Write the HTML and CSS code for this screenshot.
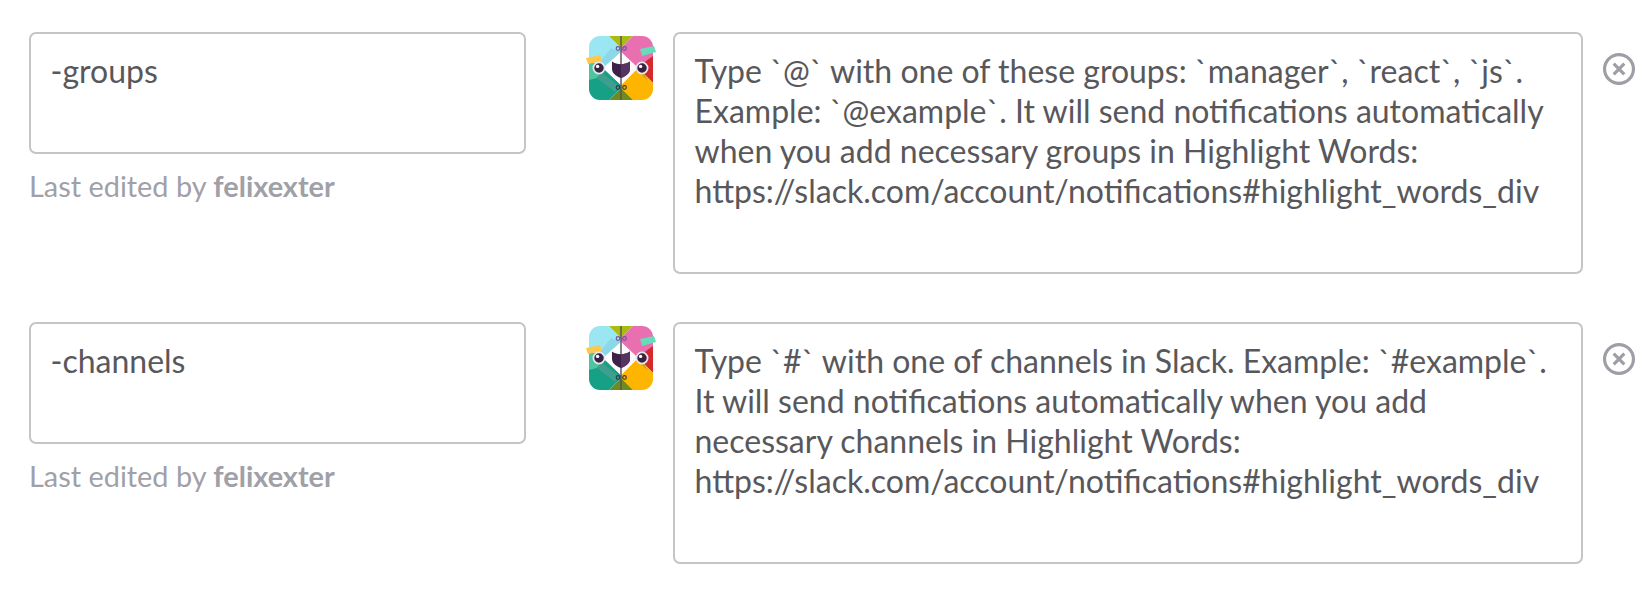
FILE: index.html
```html
<!DOCTYPE html>
<html lang="en">
<head>
    <meta charset="UTF-8" />
    <title>Slack responses</title>
    <link rel="stylesheet" href="styles.css">
</head>
<body>
    <svg class="defs" width="0" height="0">
        <defs>
            <clipPath id="bot-clip"><rect width="64" height="64" rx="11" /></clipPath>
            <g id="slackbot">
                <g clip-path="url(#bot-clip)">
                    <rect width="64" height="64" fill="#fff" />
                    <!-- top left -->
                    <polygon points="0,0 20,0 32,12 32,16 14,32 0,32" fill="#9be6f3" />
                    <polygon points="10,27 22,12 32,16 14,32" fill="#8bd9e6" />
                    <!-- top -->
                    <polygon points="20,0 44,0 32,12" fill="#a8bc12" />
                    <!-- top right -->
                    <polygon points="44,0 64,0 64,22 49,32 32,16 32,12" fill="#e86fb0" />
                    <polygon points="64,20 64,47 49,32 57,25" fill="#d42a2e" />
                    <!-- bottom right -->
                    <polygon points="49,32 64,47 64,64 44,64 32,52 32,49" fill="#fdb500" />
                    <polygon points="49,32 56,39 58,44 52,38" fill="#c9a01e" />
                    <!-- bottom -->
                    <polygon points="32,52 44,64 20,64" fill="#6f8a1d" />
                    <!-- bottom left -->
                    <polygon points="0,28 14,32 32,49 32,52 20,64 0,64" fill="#16a085" />
                    <polygon points="0,27 9,27 14,34 8,42 0,44" fill="#4cc5a0" />
                    <polygon points="12,36 30,50 26,56 8,42" fill="#3f9f8c" />
                    <!-- white middle -->
                    <polygon points="32,16 14,32 32,49" fill="#fff" />
                    <polygon points="32,16 49,32 32,49" fill="#fbf9fa" />
                    <rect x="31.3" y="0" width="1.4" height="64" fill="#55505a" />
                </g>
                <polygon points="-3,22 11,19 13,25 -1,28" fill="#fdc94c" />
                <polygon points="51,13 65,10 67,16 53,20" fill="#67dcb9" />
                <circle cx="29" cy="12.5" r="1.8" fill="none" stroke="#7d4f9a" stroke-width="1.2" />
                <circle cx="35.5" cy="12.5" r="1.8" fill="none" stroke="#7d4f9a" stroke-width="1.2" />
                <circle cx="29" cy="51.5" r="1.8" fill="none" stroke="#2d3b55" stroke-width="1.2" />
                <circle cx="35.5" cy="51.5" r="1.8" fill="none" stroke="#2d3b55" stroke-width="1.2" />
                <circle cx="10" cy="32" r="5.6" fill="#3a2340" stroke="#e9e4ee" stroke-width="1.8" />
                <circle cx="53" cy="32" r="5.6" fill="#3a2340" stroke="#e9e4ee" stroke-width="1.8" />
                <circle cx="8.6" cy="30.4" r="1.7" fill="#fff" />
                <circle cx="51.6" cy="30.4" r="1.7" fill="#fff" />
                <path d="M23 25.5 C28 29 36 29 41 25.5 L41 33 C41 38 35 41 32 42 C29 41 23 38 23 33 Z" fill="#3e2148" />
                <path d="M32 28 L32 42 C35 41 41 38 41 33 L41 25.5 C38 27.5 35 28 32 28 Z" fill="#553460" />
            </g>
        </defs>
    </svg>

    <div class="response-list">
        <div class="response-row">
            <div class="trigger-col">
                <div class="field trigger">-groups</div>
                <div class="edited">Last edited by <b>felixexter</b></div>
            </div>
            <svg class="bot" viewBox="-3 0 72 66"><use href="#slackbot" /></svg>
            <div class="field reply">Type `@` with one of these groups: `manager`, `react`, `js`.<br>Example: `@example`. It will send notifications automatically<br>when you add necessary groups in Highlight Words:<br>https://slack.com/account/notifications#highlight_words_div</div>
            <svg class="remove" viewBox="0 0 32 32">
                <circle cx="16" cy="16" r="13.6" />
                <path d="M11 11 L21 21 M21 11 L11 21" />
            </svg>
        </div>

        <div class="response-row">
            <div class="trigger-col">
                <div class="field trigger">-channels</div>
                <div class="edited">Last edited by <b>felixexter</b></div>
            </div>
            <svg class="bot" viewBox="-3 0 72 66"><use href="#slackbot" /></svg>
            <div class="field reply">Type `#` with one of channels in Slack. Example: `#example`.<br>It will send notifications automatically when you add<br>necessary channels in Highlight Words:<br>https://slack.com/account/notifications#highlight_words_div</div>
            <svg class="remove" viewBox="0 0 32 32">
                <circle cx="16" cy="16" r="13.6" />
                <path d="M11 11 L21 21 M21 11 L11 21" />
            </svg>
        </div>
    </div>
</body>
</html>
```

FILE: styles.css
```css
body {
    margin: 0;
    background: #fff;
    font-family: Lato, sans-serif;
    color: #58585c;
}
.defs {
    display: block;
}
.response-list {
    padding: 32px 0 0 29px;
    display: flex;
    flex-direction: column;
    gap: 48px;
}
.response-row {
    display: flex;
    align-items: flex-start;
}
.trigger-col {
    width: 497px;
    height: 242px;
}
.field {
    box-sizing: border-box;
    border: 2px solid #c5c5c5;
    border-radius: 7px;
    padding: 17px 19.5px;
    font-size: 32px;
    line-height: 40px;
    white-space: nowrap;
}
.trigger {
    height: 122px;
}
.edited {
    margin-top: 14px;
    font-size: 28.9px;
    line-height: 36px;
    color: #a0a0a8;
}
.edited b {
    font-weight: 700;
}
.bot {
    width: 72px;
    height: 66px;
    margin: 4px 0 0 60px;
    flex: none;
}
.reply {
    width: 910px;
    height: 242px;
    margin-left: 15px;
    flex: none;
}
.remove {
    width: 34px;
    height: 34px;
    margin: 20px 0 0 19px;
    flex: none;
    fill: none;
    stroke: #9e9ea6;
    stroke-width: 3;
}
```
